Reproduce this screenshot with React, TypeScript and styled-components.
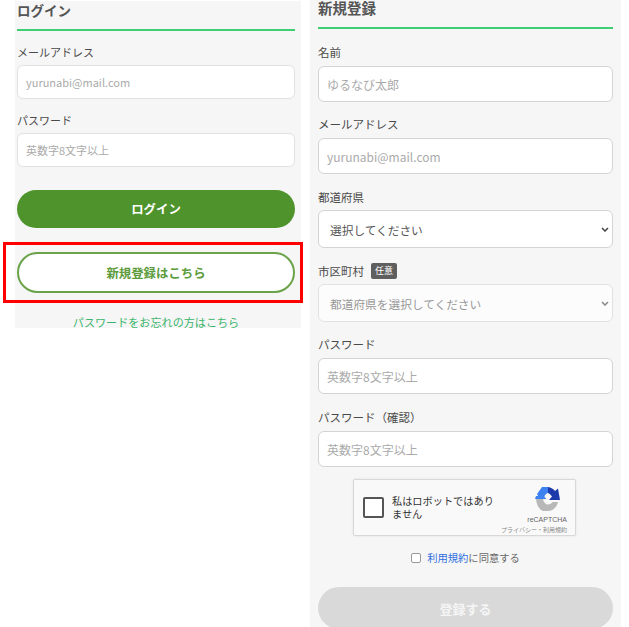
import { createGlobalStyle } from "styled-components";
import styled from "styled-components";

const GlobalStyle = createGlobalStyle`
  html, body {
    margin: 0;
    padding: 0;
    background: #fff;
  }
  * {
    box-sizing: border-box;
  }
  body {
    font-family: "Noto Sans CJK JP", "Noto Sans", sans-serif;
    color: #444;
  }
`;

function RecaptchaLogo() {
  return (
    <svg width="25" height="24" viewBox="0 0 25 24">
      <path d="M7 0 L13 0 L13 6 C11 6.5 9.5 8 9.5 10 L11.5 12 L0 12 L1 9 L3 9 L2 7 Z" fill="#3d82f0" />
      <path d="M13 0 C16 0.5 18.5 2 20 4 L23 1.5 L25 13 L14 13 L17 9.5 C16 8 14.5 6.5 13 6 Z" fill="#1c3aa9" />
      <path d="M1 12 L8 12 C8.5 15 10.5 17.5 13 17.5 C15 17.5 16.5 16.5 17.5 15 L23 15 C22 20 18 24 13 24 L8 24 C4 22.5 1.5 18 1 12 Z" fill="#b8b8b8" />
    </svg>
  );
}

export default function App() {
  return (
    <>
      <GlobalStyle />
      <Page>
        <LoginPanel>
          <Heading $size={13.5} $lineHeight={18} $height={30}>
            ログイン
          </Heading>
          <Field $labelGap={4} $top={12}>
            <Label $size={11}>メールアドレス</Label>
            <Input $small placeholder="yurunabi@mail.com" />
          </Field>
          <Field $labelGap={4} $top={12}>
            <Label $size={11}>パスワード</Label>
            <Input $small placeholder="英数字8文字以上" />
          </Field>
          <LoginButton type="button">ログイン</LoginButton>
          <HighlightWrap>
            <OutlineButton type="button">新規登録はこちら</OutlineButton>
            <RedFrame />
          </HighlightWrap>
          <ForgotLink href="#">パスワードをお忘れの方はこちら</ForgotLink>
        </LoginPanel>

        <RegisterPanel>
          <Heading $size={14.5} $lineHeight={16} $height={29}>
            新規登録
          </Heading>
          <Field $labelGap={5} $top={14}>
            <Label>名前</Label>
            <Input placeholder="ゆるなび太郎" />
          </Field>
          <Field $labelGap={5} $top={13}>
            <Label>メールアドレス</Label>
            <Input placeholder="yurunabi@mail.com" />
          </Field>
          <Field $labelGap={4} $top={14}>
            <Label>都道府県</Label>
            <Select defaultValue="">
              <option value="">選択してください</option>
            </Select>
          </Field>
          <Field $labelGap={4} $top={14}>
            <Label>
              市区町村 <OptionalBadge>任意</OptionalBadge>
            </Label>
            <Select $muted defaultValue="">
              <option value="">都道府県を選択してください</option>
            </Select>
          </Field>
          <Field $labelGap={5} $top={13}>
            <Label>パスワード</Label>
            <Input placeholder="英数字8文字以上" />
          </Field>
          <Field $labelGap={5} $top={14}>
            <Label>パスワード（確認）</Label>
            <Input placeholder="英数字8文字以上" />
          </Field>
          <Captcha>
            <CaptchaBox />
            <CaptchaText>私はロボットではありません</CaptchaText>
            <CaptchaBrand>
              <LogoSlot>
                <RecaptchaLogo />
              </LogoSlot>
              <BrandName>reCAPTCHA</BrandName>
              <BrandLinks>プライバシー・利用規約</BrandLinks>
            </CaptchaBrand>
          </Captcha>
          <Agree>
            <AgreeCheck type="checkbox" />
            <span>
              <TermsLink href="#">利用規約</TermsLink>に同意する
            </span>
          </Agree>
          <SubmitButton type="button">登録する</SubmitButton>
        </RegisterPanel>
      </Page>
    </>
  );
}

const Page = styled.div`
  width: 629px;
  height: 627px;
  overflow: hidden;
  display: flex;
  align-items: flex-start;
`;

const LoginPanel = styled.section`
  width: 286px;
  height: 327px;
  margin: 1px 0 0 15px;
  padding: 0 6px 0 2px;
  background: #f6f6f6;
  display: flex;
  flex-direction: column;
`;

const RegisterPanel = styled.section`
  width: 311px;
  height: 627px;
  margin-left: 9px;
  padding: 0 8px;
  background: #f6f6f6;
  overflow: hidden;
  display: flex;
  flex-direction: column;
`;

const Heading = styled.h2<{ $size: number; $lineHeight: number; $height: number }>`
  height: ${(props) => props.$height}px;
  margin: 0;
  font-size: ${(props) => props.$size}px;
  line-height: ${(props) => props.$lineHeight}px;
  font-weight: 700;
  color: #555;
  border-bottom: 2px solid #3ecf72;
  flex-shrink: 0;
`;

const Field = styled.div<{ $labelGap: number; $top: number }>`
  margin-top: ${(props) => props.$top}px;
  display: flex;
  flex-direction: column;
  gap: ${(props) => props.$labelGap}px;
`;

const Label = styled.label<{ $size?: number }>`
  height: 18px;
  font-size: ${(props) => props.$size ?? 11.5}px;
  line-height: 18px;
  color: #4a4a4a;
  display: flex;
  align-items: center;
  gap: 7px;
`;

const OptionalBadge = styled.span`
  width: 26px;
  height: 16px;
  border-radius: 2px;
  background: #5f5f5f;
  color: #fff;
  font-size: 9px;
  line-height: 16px;
  text-align: center;
`;

const Input = styled.input<{ $small?: boolean }>`
  width: 100%;
  height: ${(props) => (props.$small ? 34 : 36)}px;
  padding: 0 8px;
  border: 1px solid ${(props) => (props.$small ? "#e2e2e2" : "#d4d4d4")};
  border-radius: 6px;
  background: #fff;
  font-family: inherit;
  font-size: ${(props) => (props.$small ? 11 : 12)}px;
  outline: none;

  &::placeholder {
    color: #aaa;
    opacity: 1;
  }
`;

const chevron = (color: string) =>
  `url("data:image/svg+xml,%3Csvg xmlns='http://www.w3.org/2000/svg' width='8' height='5' viewBox='0 0 8 5'%3E%3Cpath d='M1 1l3 3 3-3' fill='none' stroke='${color}' stroke-width='1.5'/%3E%3C/svg%3E")`;

const Select = styled.select<{ $muted?: boolean }>`
  appearance: none;
  width: 100%;
  height: 38px;
  padding: 0 11px;
  border: 1px solid ${(props) => (props.$muted ? "#e2e2e2" : "#d4d4d4")};
  border-radius: 6px;
  background-color: ${(props) => (props.$muted ? "#fcfcfc" : "#fff")};
  background-image: ${(props) => chevron(props.$muted ? "%23888" : "%23444")};
  background-repeat: no-repeat;
  background-position: right 3px center;
  color: ${(props) => (props.$muted ? "#999" : "#555")};
  font-family: inherit;
  font-size: 11.7px;
  outline: none;
`;

const LoginButton = styled.button`
  width: 100%;
  height: 38px;
  margin-top: 23px;
  border: none;
  border-radius: 19px;
  background: #4e932b;
  color: #fff;
  font-family: inherit;
  font-size: 12.4px;
  font-weight: 700;
  flex-shrink: 0;
`;

const HighlightWrap = styled.div`
  position: relative;
  margin-top: 24px;
  flex-shrink: 0;
`;

const OutlineButton = styled.button`
  display: block;
  width: 100%;
  height: 41px;
  border: 2px solid #6aa34a;
  border-radius: 21px;
  background: #fff;
  color: #5c9c3c;
  font-family: inherit;
  font-size: 12.4px;
  font-weight: 700;
`;

const RedFrame = styled.div`
  position: absolute;
  left: -14px;
  top: -10px;
  width: 300px;
  height: 61px;
  border: 3px solid #ff0000;
`;

const ForgotLink = styled.a`
  margin-top: 23px;
  font-size: 11.1px;
  line-height: 12px;
  color: #3cb56c;
  text-align: center;
  text-decoration: none;
  flex-shrink: 0;
`;

const Captcha = styled.div`
  width: 223px;
  height: 57px;
  margin: 12px 0 0 35px;
  padding: 0 8px 0 9px;
  border: 1px solid #d8d8d8;
  border-radius: 2px;
  background: #f9f9f9;
  box-shadow: 0 0 3px rgba(0, 0, 0, 0.08);
  display: flex;
  align-items: center;
  flex-shrink: 0;
`;

const CaptchaBox = styled.div`
  width: 21px;
  height: 21px;
  border: 2px solid #555;
  border-radius: 2px;
  background: #fff;
  flex-shrink: 0;
`;

const CaptchaText = styled.div`
  width: 108px;
  margin-left: 8px;
  font-size: 10.2px;
  line-height: 12.5px;
  color: #333;
`;

const CaptchaBrand = styled.div`
  margin-left: auto;
  padding-top: 7px;
  display: flex;
  flex-direction: column;
  align-items: flex-end;
  align-self: flex-start;
`;

const LogoSlot = styled.div`
  height: 24px;
  margin-right: 7px;
`;

const BrandName = styled.div`
  font-family: "Liberation Sans", sans-serif;
  font-size: 7px;
  line-height: 9px;
  margin-top: 4px;
  color: #666;
  white-space: nowrap;
`;

const BrandLinks = styled.div`
  font-size: 6px;
  line-height: 8px;
  margin-top: 2px;
  color: #888;
  white-space: nowrap;
`;

const Agree = styled.label`
  margin-top: 13px;
  height: 18px;
  font-size: 10.3px;
  line-height: 18px;
  color: #666;
  display: flex;
  justify-content: center;
  align-items: center;
  gap: 6px;
  flex-shrink: 0;
`;

const AgreeCheck = styled.input`
  appearance: none;
  width: 10px;
  height: 10px;
  margin: 0;
  border: 1px solid #999;
  border-radius: 2px;
  background: #fff;
`;

const TermsLink = styled.a`
  color: #2f6fe0;
  text-decoration: none;
`;

const SubmitButton = styled.button`
  width: 100%;
  height: 42px;
  margin-top: 20px;
  border: none;
  border-radius: 21px;
  background: #d9d9d9;
  color: #f5f5f5;
  font-family: inherit;
  font-size: 13px;
  font-weight: 700;
  flex-shrink: 0;
`;
